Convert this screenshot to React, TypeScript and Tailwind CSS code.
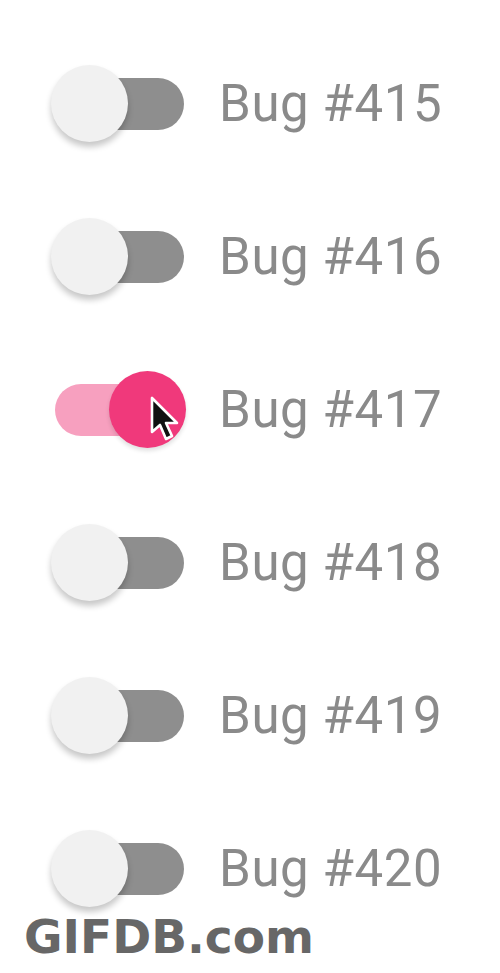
import { useState } from "react";

const bugs = [415, 416, 417, 418, 419, 420];

function Toggle({ on }: { on: boolean }) {
  return (
    <div className="relative w-[134px] h-[78px] flex items-center">
      <div
        className={
          "ml-[4px] w-[129px] h-[52px] rounded-full " +
          (on ? "bg-[#f7a0bf]" : "bg-[#8e8e8e]")
        }
      />
      <div
        className={
          "absolute top-0 w-[77px] h-[77px] rounded-full " +
          (on
            ? "left-[58px] bg-[#f0397b] shadow-[0_3px_4px_rgba(0,0,0,0.12)]"
            : "left-0 bg-[#f1f1f1] shadow-[0_5px_6px_rgba(0,0,0,0.22)]")
        }
      />
    </div>
  );
}

function Cursor() {
  return (
    <svg
      className="absolute left-[99px] top-[25px]"
      width="34"
      height="50"
      viewBox="0 0 17 25"
    >
      <path
        d="M1 1 L1 18 L5 14.5 L8 21.5 L11 20 L8 13.5 L13.5 13.5 Z"
        fill="#111"
        stroke="#fff"
        strokeWidth="1.3"
        strokeLinejoin="round"
      />
    </svg>
  );
}

export default function App() {
  const [states] = useState(bugs.map((b) => b === 417));
  return (
    <div className="relative w-[500px] h-[973px] bg-white overflow-hidden font-['Roboto',sans-serif]">
      <div className="flex flex-col gap-[75px] pt-[65px] pl-[51px]">
        {bugs.map((b, i) => (
          <div key={b} className="relative flex items-center gap-[34px]">
            <Toggle on={states[i]} />
            {states[i] && <Cursor />}
            <span className="text-[51px] leading-none tracking-[0.6px] text-[#8a8a8a] -mt-[2px]">
              Bug #{b}
            </span>
          </div>
        ))}
      </div>
      <div className="absolute left-[24px] top-[913px] text-[47px] leading-none font-bold text-[#676767] font-['DejaVu_Sans',sans-serif]">
        GIFDB.com
      </div>
    </div>
  );
}
